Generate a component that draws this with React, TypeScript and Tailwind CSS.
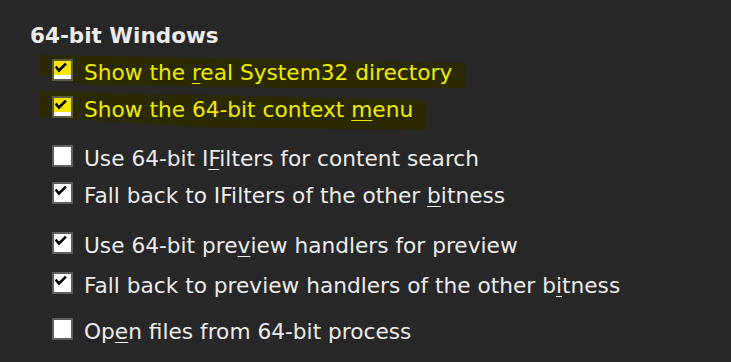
import React from "react";

type Item = { pre: string; key: string; post: string; checked: boolean; hl?: boolean; mt: string };

const items: Item[] = [
  { pre: "Show the ", key: "r", post: "eal System32 directory", checked: true, hl: true, mt: "mt-0" },
  { pre: "Show the 64-bit context ", key: "m", post: "enu", checked: true, hl: true, mt: "mt-0" },
  { pre: "Use 64-bit I", key: "F", post: "ilters for content search", checked: false, mt: "mt-[12px]" },
  { pre: "Fall back to IFilters of the other ", key: "b", post: "itness", checked: true, mt: "mt-0" },
  { pre: "Use 64-bit pre", key: "v", post: "iew handlers for preview", checked: true, mt: "mt-[12.5px]" },
  { pre: "Fall back to preview handlers of the other b", key: "i", post: "tness", checked: true, mt: "mt-[3px]" },
  { pre: "Op", key: "e", post: "n files from 64-bit process", checked: false, mt: "mt-[9.5px]" },
];

function Box({ checked, hl }: { checked: boolean; hl?: boolean }) {
  return (
    <div
      className={`relative w-[21px] h-[22px] mb-[6px] shrink-0 border-2 ${
        hl ? "border-[#5e5c40] bg-[#ffffff]" : "border-[#5f5f5f] bg-[#ffffff]"
      }`}
    >
      {hl && <div className="absolute left-0 top-0 w-full h-[14px] bg-[#f5e600]" />}
      {checked && (
        <svg className="absolute left-[1px] top-[2px]" width="12" height="10" viewBox="0 0 12 10">
          <path d="M1.5 4.5 L4 7.5 L10 1.5" fill="none" stroke="#000" strokeWidth="2.6" strokeLinecap="square" />
        </svg>
      )}
    </div>
  );
}

function Row({ item }: { item: Item }) {
  return (
    <div className={`relative flex items-center h-[37px] pl-[22px] ${item.mt}`}>
      <Box checked={item.checked} hl={item.hl} />
      <span
        className={`ml-[11px] whitespace-nowrap text-[21.7px] leading-none ${
          item.hl ? "text-[#eded00]" : "text-[#ececec]"
        }`}
      >
        {item.pre}
        <span className="underline underline-offset-[3px] decoration-1">{item.key}</span>
        {item.post}
      </span>
    </div>
  );
}

export default function App() {
  return (
    <div
      className="relative w-[731px] h-[362px] bg-[#272727] overflow-hidden pl-[30px] pt-[24px]"
      style={{ fontFamily: '"DejaVu Sans", sans-serif' }}
    >
      <svg className="absolute left-0 top-0" width="731" height="362" viewBox="0 0 731 362">
        <path
          d="M40 55 L200 58 L465 63 L466 88 L300 88 L90 85 L40 75 Z"
          fill="#2b2900"
        />
        <path
          d="M40 91 L150 94 L425 100 L426 130 L200 127 L40 117 Z"
          fill="#2b2900"
        />
      </svg>
      <div className="relative">
        <div className="text-[21.5px] font-bold leading-[24px] text-[#ececec]">64-bit Windows</div>
        <div className="mt-[6.5px] flex flex-col">
          {items.map((it, j) => (
            <Row key={j} item={it} />
          ))}
        </div>
      </div>
    </div>
  );
}
